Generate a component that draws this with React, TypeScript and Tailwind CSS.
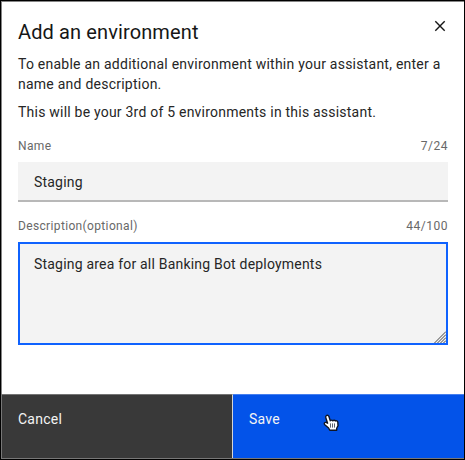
import React from 'react';

function Hand() {
  return (
    <svg className="absolute left-[322px] top-[413px]" width="17" height="18" viewBox="0 0 17 18">
      <path
        d="M3.2 1.8C4.4.6 5.7 1.5 6 2.8L7.3 6.7C8 5.9 9.2 5.8 9.8 6.8C10.6 5.9 11.8 6 12.4 7C13.3 6.3 14.6 6.8 14.8 8L15 11.8L13.7 14.3V16.3H6.8L5.6 14L1.8 10.7C.6 9.5 1.5 8.1 3 8.4L4.6 9.2L2.8 3.8C2.5 3 2.6 2.3 3.2 1.8Z"
        fill="#fff" stroke="#101525" strokeWidth="1.4" strokeLinejoin="round"
      />
      <path d="M7.5 9.4V13.6M9.5 9.4V13.6M11.5 9.4V13.6" stroke="#4b5060" strokeWidth="0.9" />
    </svg>
  );
}

function Grip() {
  return (
    <svg className="absolute bottom-0 right-0" width="12" height="12" viewBox="0 0 12 12">
      <path d="M.5 12L12 .5M3.5 12L12 3.5M6.5 12L12 6.5M9.5 12L12 9.5" stroke="#444" strokeWidth="1" />
    </svg>
  );
}

export default function App() {
  return (
    <div className="relative flex h-[460px] w-[465px] flex-col overflow-hidden border border-black bg-white font-['Roboto',sans-serif] text-[14px] text-[#262626]">
      <div className="flex h-[393px] flex-col border-l border-t border-[#858585] pl-4 pr-4">
        <header className="flex items-start justify-between">
          <h1 className="mt-[16px] whitespace-nowrap text-[20px] leading-[28px] tracking-[0.12px] text-[#161616]">Add an environment</h1>
          <svg className="mr-[2px] mt-[18px]" width="12" height="12" viewBox="0 0 12 12">
            <path d="M1.3 1.3L10.7 10.7M10.7 1.3L1.3 10.7" stroke="#161616" strokeWidth="1.4" />
          </svg>
        </header>
        <div className="mt-[8px] whitespace-nowrap leading-[20px]">
          <p className="tracking-[0.24px]">To enable an additional environment within your assistant, enter a<br />name and description.</p>
          <p className="mt-2 tracking-[0.22px]">This will be your 3rd of 5 environments in this assistant.</p>
        </div>
        <div className="mt-[16px] flex justify-between text-[12px] leading-[16px] tracking-[0.35px] text-[#686868]">
          <span>Name</span><span className="tracking-[0.5px]">7/24</span>
        </div>
        <div className="mt-[8px] flex h-[40px] items-center border-b-2 border-[#b8b8b8] bg-[#f3f3f3] pl-4 pt-[2px] tracking-[0.2px]">Staging</div>
        <div className="mt-[16px] flex justify-between text-[12px] leading-[16px] tracking-[0.35px] text-[#686868]">
          <span>Description(optional)</span><span className="tracking-[0.5px]">44/100</span>
        </div>
        <div className="relative mt-[8px] h-[103px] border-2 border-[#0f62fe] bg-[#f3f3f3] pl-[14px] pt-[10px] leading-[20px] tracking-[0.2px]">
          Staging area for all Banking Bot deployments
          <Grip />
        </div>
      </div>
      <footer className="flex h-[65px] border-b border-[#777] leading-[20px] tracking-[0.25px] text-[#f4f4f4]">
        <div className="w-[232px] border-l border-r border-t border-l-[#777] border-r-[#d5d5d5] border-t-[#747474] bg-[#393939] pl-4 pt-[14px]">Cancel</div>
        <div className="flex-1 border-t border-[#467fee] bg-[#0353e9] pl-4 pt-[14px]">Save</div>
      </footer>
      <Hand />
    </div>
  );
}
